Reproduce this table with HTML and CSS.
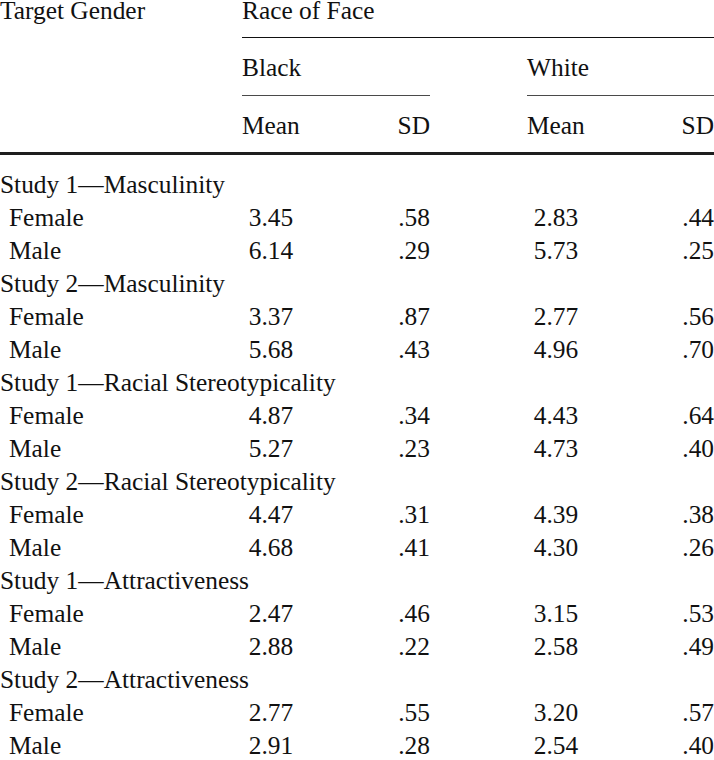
FILE: index.html
```html
<!DOCTYPE html>
<html lang="en">
<head>
<meta charset="utf-8">
<title>Table</title>
<link rel="stylesheet" href="styles.css">
</head>
<body>
<table class="stats">
  <colgroup>
    <col class="c-label">
    <col class="c-mean">
    <col class="c-sd">
    <col class="c-gap">
    <col class="c-mean">
    <col class="c-sd2">
  </colgroup>
  <thead>
    <tr class="h1">
      <th class="lab">Target Gender</th>
      <th class="race" colspan="5">Race of Face</th>
    </tr>
    <tr class="h2">
      <th></th>
      <th class="grp" colspan="2">Black</th>
      <th></th>
      <th class="grp" colspan="2">White</th>
    </tr>
    <tr class="h3">
      <th></th>
      <th class="mean-h">Mean</th>
      <th class="sd">SD</th>
      <th></th>
      <th class="mean-h">Mean</th>
      <th class="sd">SD</th>
    </tr>
  </thead>
  <tbody>
    <tr class="study first"><td colspan="6">Study 1—Masculinity</td></tr>
    <tr><td class="sub">Female</td><td class="mean">3.45</td><td class="sd">.58</td><td></td><td class="mean">2.83</td><td class="sd">.44</td></tr>
    <tr><td class="sub">Male</td><td class="mean">6.14</td><td class="sd">.29</td><td></td><td class="mean">5.73</td><td class="sd">.25</td></tr>
    <tr class="study"><td colspan="6">Study 2—Masculinity</td></tr>
    <tr><td class="sub">Female</td><td class="mean">3.37</td><td class="sd">.87</td><td></td><td class="mean">2.77</td><td class="sd">.56</td></tr>
    <tr><td class="sub">Male</td><td class="mean">5.68</td><td class="sd">.43</td><td></td><td class="mean">4.96</td><td class="sd">.70</td></tr>
    <tr class="study"><td colspan="6">Study 1—Racial Stereotypicality</td></tr>
    <tr><td class="sub">Female</td><td class="mean">4.87</td><td class="sd">.34</td><td></td><td class="mean">4.43</td><td class="sd">.64</td></tr>
    <tr><td class="sub">Male</td><td class="mean">5.27</td><td class="sd">.23</td><td></td><td class="mean">4.73</td><td class="sd">.40</td></tr>
    <tr class="study"><td colspan="6">Study 2—Racial Stereotypicality</td></tr>
    <tr><td class="sub">Female</td><td class="mean">4.47</td><td class="sd">.31</td><td></td><td class="mean">4.39</td><td class="sd">.38</td></tr>
    <tr><td class="sub">Male</td><td class="mean">4.68</td><td class="sd">.41</td><td></td><td class="mean">4.30</td><td class="sd">.26</td></tr>
    <tr class="study"><td colspan="6">Study 1—Attractiveness</td></tr>
    <tr><td class="sub">Female</td><td class="mean">2.47</td><td class="sd">.46</td><td></td><td class="mean">3.15</td><td class="sd">.53</td></tr>
    <tr><td class="sub">Male</td><td class="mean">2.88</td><td class="sd">.22</td><td></td><td class="mean">2.58</td><td class="sd">.49</td></tr>
    <tr class="study"><td colspan="6">Study 2—Attractiveness</td></tr>
    <tr><td class="sub">Female</td><td class="mean">2.77</td><td class="sd">.55</td><td></td><td class="mean">3.20</td><td class="sd">.57</td></tr>
    <tr><td class="sub">Male</td><td class="mean">2.91</td><td class="sd">.28</td><td></td><td class="mean">2.54</td><td class="sd">.40</td></tr>
  </tbody>
</table>
</body>
</html>
```

FILE: styles.css
```css
html, body {
  margin: 0;
  padding: 0;
  background: #ffffff;
  overflow: hidden;
}

.stats {
  width: 714px;
  table-layout: fixed;
  border-collapse: collapse;
  border-spacing: 0;
  font-family: "Liberation Serif", "Times New Roman", serif;
  font-size: 25.4px;
  color: #111111;
}

.c-label { width: 242px; }
.c-mean { width: 58px; }
.c-sd { width: 130px; }
.c-gap { width: 97px; }
.c-sd2 { width: 129px; }

.stats th,
.stats td {
  padding: 0;
  font-weight: normal;
  text-align: left;
  white-space: nowrap;
  vertical-align: top;
}

.stats thead th {
  line-height: 20px;
}

.h1 th {
  padding-bottom: 17px;
}

.h1 .race {
  border-bottom: 1px solid #111111;
}

.h2 th {
  padding-top: 19px;
  padding-bottom: 18px;
}

.h2 .grp {
  border-bottom: 1px solid #4a4a4a;
}

.h3 th {
  padding-top: 19px;
  padding-bottom: 17px;
  border-bottom: 3px solid #1e1e1e;
}

.stats th.sd,
.stats td.sd {
  text-align: right;
}

.stats td.mean {
  text-align: center;
}

.stats tbody td {
  line-height: 33px;
}

.stats tbody .first td {
  padding-top: 13px;
}

.stats td.sub {
  padding-left: 9px;
}
```
